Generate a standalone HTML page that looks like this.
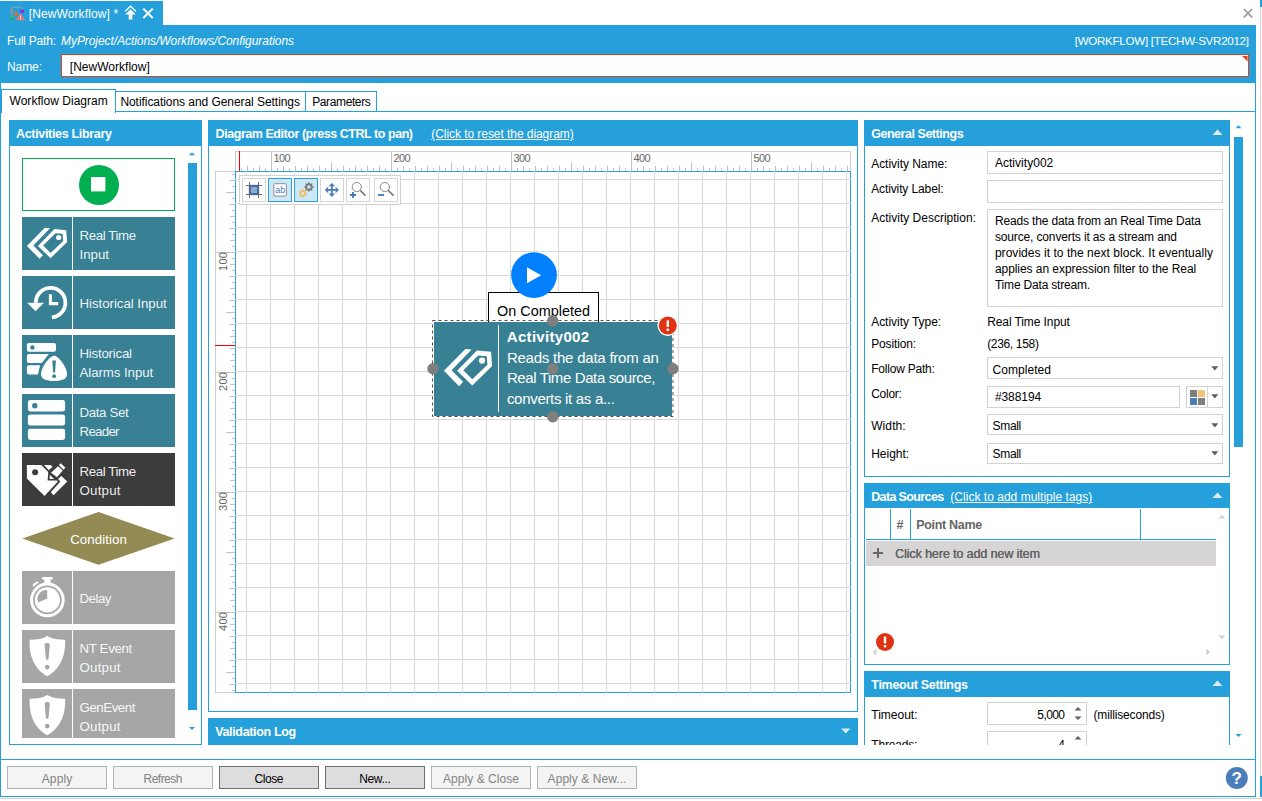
<!DOCTYPE html>
<html lang="en"><head><meta charset="utf-8"><title>[NewWorkflow] - Workflow Configuration</title>
<style>
html,body{margin:0;padding:0}
body{width:1262px;height:801px;position:relative;overflow:hidden;background:#fff;font-family:"Liberation Sans",sans-serif;font-size:12px}
.r{position:absolute;box-sizing:border-box;display:block}
.t{position:absolute;white-space:nowrap;margin:0;padding:0}
</style></head>
<body>
<!-- window chrome -->
<div class="r" style="left:0px;top:1px;width:163px;height:24px;background:#26A0DA;"></div>
<div class="r" style="left:0px;top:25px;width:1256px;height:58px;background:#26A0DA;"></div>
<div class="r" style="left:0px;top:83px;width:1px;height:714px;background:#26A0DA;"></div>
<div class="r" style="left:1255px;top:83px;width:1px;height:714px;background:#26A0DA;"></div>
<div class="r" style="left:0px;top:796px;width:1256px;height:1px;background:#26A0DA;"></div>
<div class="r" style="left:0px;top:798px;width:1262px;height:1px;background:#D6D2D2;"></div>
<div class="r" style="left:1260px;top:0px;width:2px;height:7px;background:#26A0DA;"></div>
<div class="r" style="left:1260px;top:7px;width:1px;height:769px;background:#D4D4D4;"></div>
<div class="r" style="left:1260px;top:776px;width:2px;height:21px;background:#26A0DA;"></div>
<svg class="r" style="left:10px;top:6px" width="16" height="15" viewBox="0 0 16 15">
<path d="M1.8 3.2V1.4H12.2V3.7M1.8 6.8V11.1" stroke="#a9a9a9" stroke-width="1" fill="none" stroke-dasharray="2 1.2"/>
<rect x="0.1" y="3.2" width="3.4" height="3.6" fill="#8f8f8f"/>
<rect x="10.2" y="3.7" width="3.8" height="3.1" fill="#8a2be2"/>
<rect x="4.5" y="6.5" width="3.3" height="3" fill="#ff6a00"/>
<rect x="0.1" y="11.1" width="3.4" height="3.1" fill="#22b14c"/>
<path d="M10.5 7.3 L15 14.3 H5.9 Z" fill="#e8776f"/>
<rect x="10" y="9.4" width="1" height="2.8" fill="#f7d9d6"/><rect x="10" y="12.7" width="1" height="0.9" fill="#f7d9d6"/>
</svg>
<div class="t" id="t1" style="left:28.70px;top:8.00px;font-size:12px;line-height:12px;color:#fff;letter-spacing:0.115px;">[NewWorkflow] *</div>
<svg class="r" style="left:124px;top:5px" width="13" height="16" viewBox="0 0 13 16">
<path d="M1.2 6.2 L6.5 1.2 L11.8 6.2" stroke="#fff" stroke-width="1.3" fill="none"/>
<path d="M6.5 4.2 L11.6 9.6 H8.3 V14.6 H4.7 V9.6 H1.4 Z" fill="#fff"/>
</svg>
<svg class="r" style="left:142px;top:7px" width="12" height="12" viewBox="0 0 12 12">
<path d="M1.3 1.6 L10.7 11 M10.7 1.6 L1.3 11" stroke="#fff" stroke-width="2" fill="none"/></svg>
<svg class="r" style="left:1242px;top:7px" width="12" height="12" viewBox="0 0 12 12">
<path d="M1.8 2 L10.2 10.4 M10.2 2 L1.8 10.4" stroke="#999" stroke-width="1.7" fill="none"/></svg>
<div class="t" id="t2" style="left:7.00px;top:35.00px;font-size:12px;line-height:12px;color:#fff;letter-spacing:-0.189px;">Full Path:</div>
<div class="t" id="t3" style="left:61.00px;top:35.00px;font-size:12px;line-height:12px;color:#fff;font-style:italic;letter-spacing:-0.059px;">MyProject/Actions/Workflows/Configurations</div>
<div class="t" id="t4" style="right:13.29px;top:35.00px;font-size:11.6px;line-height:11.6px;color:#fff;letter-spacing:-0.286px;">[WORKFLOW] [TECHW-SVR2012]</div>
<div class="t" id="t5" style="left:7.00px;top:61.00px;font-size:12px;line-height:12px;color:#fff;letter-spacing:-0.086px;">Name:</div>
<div class="r" style="left:61px;top:54px;width:1188px;height:23px;background:#fff;border:1px solid #E0441C;"></div>
<svg class="r" style="left:1242px;top:56px" width="6" height="6"><path d="M0 0H5.6V5.6Z" fill="#E0441C"/></svg>
<div class="t" id="t6" style="left:69.80px;top:61.00px;font-size:12px;line-height:12px;color:#000;letter-spacing:0.017px;">[NewWorkflow]</div>
<!-- tab strip -->
<div class="r" style="left:1px;top:111px;width:1255px;height:1px;background:#26A0DA;"></div>
<div class="r" style="left:1px;top:759px;width:1255px;height:1px;background:#26A0DA;"></div>
<div class="r" style="left:115px;top:91px;width:191px;height:21px;background:#fff;border:1px solid #26A0DA;"></div>
<div class="r" style="left:305px;top:91px;width:72px;height:21px;background:#fff;border:1px solid #26A0DA;"></div>
<div class="r" style="left:1px;top:89px;width:115px;height:24px;background:#fff;border:1px solid #26A0DA;border-bottom:none;"></div>
<div class="t" id="t7" style="left:9.50px;top:95.00px;font-size:12px;line-height:12px;color:#000;letter-spacing:0.032px;">Workflow Diagram</div>
<div class="t" id="t8" style="left:120.40px;top:96.00px;font-size:12px;line-height:12px;color:#000;letter-spacing:-0.056px;">Notifications and General Settings</div>
<div class="t" id="t9" style="left:312.20px;top:96.00px;font-size:12px;line-height:12px;color:#000;letter-spacing:-0.381px;">Parameters</div>
<!-- activities library -->
<div class="r" style="left:9px;top:120px;width:193px;height:625px;background:#fff;border:1px solid #26A0DA;"></div>
<div class="r" style="left:9px;top:120px;width:193px;height:26px;background:#26A0DA;"></div>
<div class="t" id="t10" style="left:16.00px;top:128.00px;font-size:12.5px;line-height:12.5px;color:#fff;font-weight:bold;letter-spacing:-0.320px;">Activities Library</div>
<svg class="r" style="left:188px;top:151px" width="9" height="6"><path d="M1 4.2 L4 1.2 L7 4.2Z" fill="#26A0DA"/></svg>
<div class="r" style="left:188px;top:163px;width:9px;height:547px;background:#26A0DA;"></div>
<svg class="r" style="left:188px;top:726px" width="9" height="6"><path d="M1 1 L4 4 L7 1Z" fill="#26A0DA"/></svg>
<div class="r" style="left:22px;top:158px;width:153px;height:53px;background:#fff;border:1px solid #00B050;"></div>
<svg class="r" style="left:78px;top:164px" width="42" height="42" viewBox="0 0 42 42"><circle cx="21" cy="21" r="20" fill="#00B050"/><rect x="13" y="13" width="14.4" height="14.4" fill="#fff"/></svg>
<div class="r" style="left:22px;top:217px;width:153px;height:53px;overflow:hidden">
<div class="r" style="left:0;top:0;width:49.7px;height:53px;background:#388194"></div>
<div class="r" style="left:51.1px;top:0;width:101.9px;height:53px;background:#388194"></div>
<svg class="r" style="left:0;top:0" width="50" height="53" viewBox="0 0 50 53"><path d="M22.8 10.8 L28 11.3 L11.3 28.6 L20.9 38.2 L17.6 41.8 L4.9 28.9 Z" fill="#fff"/>
<path fill-rule="evenodd" fill="#fff" d="M32.4 12.1 L44.2 13.2 L45.1 25 L28.6 41.2 L15.9 28.9 Z M33.5 16.3 L21.1 28.6 L28.6 36 L41.2 23.9 L40.6 16.8 Z"/>
<circle cx="36.7" cy="20.5" r="2.6" fill="#fff"/></svg>
</div>
<div class="t" id="t11" style="left:79.50px;top:229.00px;font-size:13.3px;line-height:13.3px;color:rgba(255,255,255,.93);letter-spacing:-0.407px;">Real Time</div>
<div class="t" id="t12" style="left:79.50px;top:248.00px;font-size:13.3px;line-height:13.3px;color:rgba(255,255,255,.93);letter-spacing:-0.020px;">Input</div>
<div class="r" style="left:22px;top:276px;width:153px;height:53px;overflow:hidden">
<div class="r" style="left:0;top:0;width:49.7px;height:53px;background:#388194"></div>
<div class="r" style="left:51.1px;top:0;width:101.9px;height:53px;background:#388194"></div>
<svg class="r" style="left:0;top:0" width="50" height="53" viewBox="0 0 50 53"><path d="M13.8 26.7 A14.8 14.8 0 1 1 29.9 41.4" stroke="#fff" stroke-width="3.8" fill="none"/>
<path d="M5.2 26.7 H22 L13.5 35.2 Z" fill="#fff"/>
<path d="M26.9 18.2 H29.9 V26.1 H36.2 V29.2 H26.9 Z" fill="#fff"/></svg>
</div>
<div class="t" id="t13" style="left:79.50px;top:297.00px;font-size:13.3px;line-height:13.3px;color:rgba(255,255,255,.93);letter-spacing:-0.050px;">Historical Input</div>
<div class="r" style="left:22px;top:335px;width:153px;height:53px;overflow:hidden">
<div class="r" style="left:0;top:0;width:49.7px;height:53px;background:#388194"></div>
<div class="r" style="left:51.1px;top:0;width:101.9px;height:53px;background:#388194"></div>
<svg class="r" style="left:0;top:0" width="50" height="53" viewBox="0 0 50 53"><rect x="4.9" y="8" width="29.1" height="8.8" rx="2" fill="#fff"/>
<circle cx="10.4" cy="12.5" r="2.2" fill="#388194"/>
<path d="M6.9 19 H26.9 L19.8 28.1 H6.9 A2 2 0 0 1 4.9 26.1 V21 A2 2 0 0 1 6.9 19Z" fill="#fff"/>
<path d="M6.9 30.3 H18.1 L15.9 39.6 H6.9 A2 2 0 0 1 4.9 37.6 V32.3 A2 2 0 0 1 6.9 30.3Z" fill="#fff"/>
<path d="M32.1 20.6 C38 22 45.6 34 45 40 C44.5 44.6 38 46 32 46 C26 46 19.5 44.6 19 40 C18.4 34 26.2 22 32.1 20.6 Z" fill="#fff"/>
<path d="M30.3 25.6 H33.9 L33.1 37.4 H31.1 Z" fill="#388194"/><circle cx="32.1" cy="41.2" r="1.9" fill="#388194"/></svg>
</div>
<div class="t" id="t14" style="left:79.50px;top:347.00px;font-size:13.3px;line-height:13.3px;color:rgba(255,255,255,.93);letter-spacing:-0.243px;">Historical</div>
<div class="t" id="t15" style="left:79.50px;top:366.00px;font-size:13.3px;line-height:13.3px;color:rgba(255,255,255,.93);letter-spacing:-0.086px;">Alarms Input</div>
<div class="r" style="left:22px;top:394px;width:153px;height:53px;overflow:hidden">
<div class="r" style="left:0;top:0;width:49.7px;height:53px;background:#388194"></div>
<div class="r" style="left:51.1px;top:0;width:101.9px;height:53px;background:#388194"></div>
<svg class="r" style="left:0;top:0" width="50" height="53" viewBox="0 0 50 53"><rect x="5.9" y="6.1" width="37.2" height="11.3" rx="2.4" fill="#fff"/>
<rect x="5.9" y="20.4" width="37.2" height="11.2" rx="2.4" fill="#fff"/>
<rect x="5.9" y="34.7" width="37.2" height="11.2" rx="2.4" fill="#fff"/>
<circle cx="12.8" cy="11.7" r="2.7" fill="#388194"/></svg>
</div>
<div class="t" id="t16" style="left:79.50px;top:406.00px;font-size:13.3px;line-height:13.3px;color:rgba(255,255,255,.93);letter-spacing:-0.364px;">Data Set</div>
<div class="t" id="t17" style="left:79.50px;top:425.00px;font-size:13.3px;line-height:13.3px;color:rgba(255,255,255,.93);letter-spacing:-0.725px;">Reader</div>
<div class="r" style="left:22px;top:453px;width:153px;height:53px;overflow:hidden">
<div class="r" style="left:0;top:0;width:49.7px;height:53px;background:#3C3C3C"></div>
<div class="r" style="left:51.1px;top:0;width:101.9px;height:53px;background:#3C3C3C"></div>
<svg class="r" style="left:0;top:0" width="50" height="53" viewBox="0 0 50 53"><path d="M4.9 11.9 H19.2 L35.9 28.4 L22.5 42.9 L4.9 25.6 Z" fill="#fff"/>
<circle cx="13.1" cy="19.2" r="3" fill="#3C3C3C"/>
<path d="M22 11.9 H28.6 L31.3 14.6 L27.5 17.9 Z" fill="#fff"/>
<path d="M39.3 23.1 L45.3 28.6 L31.6 42.3 L28.8 39.3 L38.4 28.6 L36 26.1 Z" fill="#fff"/>
<path d="M26.4 17.5 L36.8 8.2 L43.6 15.2 L36 23.3 L34.6 27.4 H25.6 Z" fill="#3C3C3C"/>
<path d="M29 19.7 L36 13.2 L40.7 17.5 L35 24.2 Z" fill="#fff"/>
<path d="M36.9 12 L38.7 10.2 L43.4 14.8 L41.5 16.7 Z" fill="#fff"/>
<path d="M27.7 21.8 V26 H32.2 Z" fill="#fff"/></svg>
</div>
<div class="t" id="t18" style="left:79.50px;top:465.00px;font-size:13.3px;line-height:13.3px;color:rgba(255,255,255,.93);letter-spacing:-0.407px;">Real Time</div>
<div class="t" id="t19" style="left:79.50px;top:484.00px;font-size:13.3px;line-height:13.3px;color:rgba(255,255,255,.93);letter-spacing:0.216px;">Output</div>
<svg class="r" style="left:22px;top:512px" width="153" height="53" viewBox="0 0 153 53"><path d="M0.4 26.4 L76.5 0 L152.6 26.4 L76.5 52.7 Z" fill="#948A54"/></svg>
<div class="t" id="t20" style="left:98.53px;transform:translateX(-50%);top:533.00px;font-size:13.3px;line-height:13.3px;color:#fff;letter-spacing:0.052px;">Condition</div>
<div class="r" style="left:22px;top:571px;width:153px;height:53px;overflow:hidden">
<div class="r" style="left:0;top:0;width:49.7px;height:53px;background:#A6A6A6"></div>
<div class="r" style="left:51.1px;top:0;width:101.9px;height:53px;background:#A6A6A6"></div>
<svg class="r" style="left:0;top:0" width="50" height="53" viewBox="0 0 50 53"><circle cx="25.4" cy="28.9" r="15.8" stroke="#fff" stroke-width="3" fill="none"/>
<circle cx="25.4" cy="28.9" r="12.6" fill="#fff"/>
<path d="M25.2 27.6 V19 A9.2 9.2 0 0 0 16.1 31.6 Z" fill="#A6A6A6"/>
<rect x="20" y="6" width="10.8" height="2.4" rx="0.8" fill="#fff"/><rect x="22.2" y="8" width="6.4" height="5" fill="#fff"/>
<path d="M10.9 15.9 C10 12.4 14 9.8 17.3 11 Z" fill="#fff"/></svg>
</div>
<div class="t" id="t21" style="left:79.50px;top:592.00px;font-size:13.3px;line-height:13.3px;color:rgba(255,255,255,.93);letter-spacing:-0.500px;">Delay</div>
<div class="r" style="left:22px;top:630px;width:153px;height:53px;overflow:hidden">
<div class="r" style="left:0;top:0;width:49.7px;height:53px;background:#A6A6A6"></div>
<div class="r" style="left:51.1px;top:0;width:101.9px;height:53px;background:#A6A6A6"></div>
<svg class="r" style="left:0;top:0" width="50" height="53" viewBox="0 0 50 53"><path d="M25.3 6.1 C29 8.6 36 10 43.1 9.7 C43.8 24 39.4 38.4 25.3 46.2 C11.2 38.4 6.9 24 7.7 9.7 C14.6 10 21.6 8.6 25.3 6.1 Z" fill="#fff"/>
<path d="M22.6 15 C22.6 12.4 27.8 12.4 27.8 15 L26.5 28.8 C26.4 30.3 24 30.3 23.9 28.8 Z" fill="#A6A6A6"/>
<circle cx="25.2" cy="37.1" r="2.3" fill="#A6A6A6"/></svg>
</div>
<div class="t" id="t22" style="left:79.50px;top:642.00px;font-size:13.3px;line-height:13.3px;color:rgba(255,255,255,.93);letter-spacing:-0.355px;">NT Event</div>
<div class="t" id="t23" style="left:79.50px;top:661.00px;font-size:13.3px;line-height:13.3px;color:rgba(255,255,255,.93);letter-spacing:0.216px;">Output</div>
<div class="r" style="left:0;top:0;width:203px;height:738px;overflow:hidden">
<div class="r" style="left:22px;top:689px;width:153px;height:53px;overflow:hidden">
<div class="r" style="left:0;top:0;width:49.7px;height:53px;background:#A6A6A6"></div>
<div class="r" style="left:51.1px;top:0;width:101.9px;height:53px;background:#A6A6A6"></div>
<svg class="r" style="left:0;top:0" width="50" height="53" viewBox="0 0 50 53"><path d="M25.3 6.1 C29 8.6 36 10 43.1 9.7 C43.8 24 39.4 38.4 25.3 46.2 C11.2 38.4 6.9 24 7.7 9.7 C14.6 10 21.6 8.6 25.3 6.1 Z" fill="#fff"/>
<path d="M22.6 15 C22.6 12.4 27.8 12.4 27.8 15 L26.5 28.8 C26.4 30.3 24 30.3 23.9 28.8 Z" fill="#A6A6A6"/>
<circle cx="25.2" cy="37.1" r="2.3" fill="#A6A6A6"/></svg>
</div>
<div class="t" id="t24" style="left:79.50px;top:701.00px;font-size:13.3px;line-height:13.3px;color:rgba(255,255,255,.93);letter-spacing:-0.463px;">GenEvent</div>
<div class="t" id="t25" style="left:79.50px;top:720.00px;font-size:13.3px;line-height:13.3px;color:rgba(255,255,255,.93);letter-spacing:0.216px;">Output</div>
</div>
<!-- diagram editor -->
<div class="r" style="left:208px;top:120px;width:650px;height:592px;background:#fff;border:1px solid #26A0DA;"></div>
<div class="r" style="left:208px;top:120px;width:650px;height:26px;background:#26A0DA;"></div>
<div class="t" id="t26" style="left:215.60px;top:128.00px;font-size:12.5px;line-height:12.5px;color:#fff;font-weight:bold;letter-spacing:-0.451px;">Diagram Editor (press CTRL to pan)</div>
<div class="t" id="t27" style="left:431.30px;top:128.00px;font-size:12px;line-height:12px;color:#fff;text-decoration:underline;letter-spacing:-0.061px;">(Click to reset the diagram)</div>
<div class="r" style="left:235px;top:171px;width:616px;height:522px;background:#fff;border:1px solid #26A0DA;"></div>
<svg class="r" style="left:235px;top:171px" width="616" height="522" viewBox="235 171 616 522" shape-rendering="crispEdges"><rect x="246" y="171" width="1" height="522" fill="#D9D9D9"/><rect x="270" y="171" width="1" height="522" fill="#D9D9D9"/><rect x="294" y="171" width="1" height="522" fill="#D9D9D9"/><rect x="318" y="171" width="1" height="522" fill="#D9D9D9"/><rect x="342" y="171" width="1" height="522" fill="#D9D9D9"/><rect x="366" y="171" width="1" height="522" fill="#D9D9D9"/><rect x="390" y="171" width="1" height="522" fill="#D9D9D9"/><rect x="414" y="171" width="1" height="522" fill="#D9D9D9"/><rect x="438" y="171" width="1" height="522" fill="#D9D9D9"/><rect x="462" y="171" width="1" height="522" fill="#D9D9D9"/><rect x="486" y="171" width="1" height="522" fill="#D9D9D9"/><rect x="510" y="171" width="1" height="522" fill="#D9D9D9"/><rect x="534" y="171" width="1" height="522" fill="#D9D9D9"/><rect x="558" y="171" width="1" height="522" fill="#D9D9D9"/><rect x="582" y="171" width="1" height="522" fill="#D9D9D9"/><rect x="606" y="171" width="1" height="522" fill="#D9D9D9"/><rect x="630" y="171" width="1" height="522" fill="#D9D9D9"/><rect x="654" y="171" width="1" height="522" fill="#D9D9D9"/><rect x="678" y="171" width="1" height="522" fill="#D9D9D9"/><rect x="702" y="171" width="1" height="522" fill="#D9D9D9"/><rect x="726" y="171" width="1" height="522" fill="#D9D9D9"/><rect x="750" y="171" width="1" height="522" fill="#D9D9D9"/><rect x="774" y="171" width="1" height="522" fill="#D9D9D9"/><rect x="798" y="171" width="1" height="522" fill="#D9D9D9"/><rect x="822" y="171" width="1" height="522" fill="#D9D9D9"/><rect x="846" y="171" width="1" height="522" fill="#D9D9D9"/><rect x="235" y="179" width="616" height="1" fill="#D9D9D9"/><rect x="235" y="203" width="616" height="1" fill="#D9D9D9"/><rect x="235" y="227" width="616" height="1" fill="#D9D9D9"/><rect x="235" y="251" width="616" height="1" fill="#D9D9D9"/><rect x="235" y="275" width="616" height="1" fill="#D9D9D9"/><rect x="235" y="299" width="616" height="1" fill="#D9D9D9"/><rect x="235" y="323" width="616" height="1" fill="#D9D9D9"/><rect x="235" y="347" width="616" height="1" fill="#D9D9D9"/><rect x="235" y="371" width="616" height="1" fill="#D9D9D9"/><rect x="235" y="395" width="616" height="1" fill="#D9D9D9"/><rect x="235" y="419" width="616" height="1" fill="#D9D9D9"/><rect x="235" y="443" width="616" height="1" fill="#D9D9D9"/><rect x="235" y="467" width="616" height="1" fill="#D9D9D9"/><rect x="235" y="491" width="616" height="1" fill="#D9D9D9"/><rect x="235" y="515" width="616" height="1" fill="#D9D9D9"/><rect x="235" y="539" width="616" height="1" fill="#D9D9D9"/><rect x="235" y="563" width="616" height="1" fill="#D9D9D9"/><rect x="235" y="587" width="616" height="1" fill="#D9D9D9"/><rect x="235" y="611" width="616" height="1" fill="#D9D9D9"/><rect x="235" y="635" width="616" height="1" fill="#D9D9D9"/><rect x="235" y="659" width="616" height="1" fill="#D9D9D9"/><rect x="235" y="683" width="616" height="1" fill="#D9D9D9"/></svg>
<svg class="r" style="left:235px;top:151px" width="616" height="20" viewBox="235 151 616 20" shape-rendering="crispEdges"><rect x="235" y="151" width="616" height="20" fill="#fff"/><rect x="235" y="151" width="616" height="1" fill="#CFCFCF"/><rect x="235" y="151" width="1" height="20" fill="#CFCFCF"/><rect x="850" y="151" width="1" height="20" fill="#CFCFCF"/><rect x="241" y="168" width="1" height="3" fill="#C4C4C4"/><rect x="247" y="166" width="1" height="5" fill="#C4C4C4"/><rect x="253" y="168" width="1" height="3" fill="#C4C4C4"/><rect x="259" y="166" width="1" height="5" fill="#C4C4C4"/><rect x="265" y="168" width="1" height="3" fill="#C4C4C4"/><rect x="271" y="151" width="1" height="20" fill="#C4C4C4"/><rect x="277" y="168" width="1" height="3" fill="#C4C4C4"/><rect x="283" y="166" width="1" height="5" fill="#C4C4C4"/><rect x="289" y="168" width="1" height="3" fill="#C4C4C4"/><rect x="295" y="166" width="1" height="5" fill="#C4C4C4"/><rect x="301" y="168" width="1" height="3" fill="#C4C4C4"/><rect x="307" y="166" width="1" height="5" fill="#C4C4C4"/><rect x="313" y="168" width="1" height="3" fill="#C4C4C4"/><rect x="319" y="166" width="1" height="5" fill="#C4C4C4"/><rect x="325" y="168" width="1" height="3" fill="#C4C4C4"/><rect x="331" y="162" width="1" height="9" fill="#C4C4C4"/><rect x="337" y="168" width="1" height="3" fill="#C4C4C4"/><rect x="343" y="166" width="1" height="5" fill="#C4C4C4"/><rect x="349" y="168" width="1" height="3" fill="#C4C4C4"/><rect x="355" y="166" width="1" height="5" fill="#C4C4C4"/><rect x="361" y="168" width="1" height="3" fill="#C4C4C4"/><rect x="367" y="166" width="1" height="5" fill="#C4C4C4"/><rect x="373" y="168" width="1" height="3" fill="#C4C4C4"/><rect x="379" y="166" width="1" height="5" fill="#C4C4C4"/><rect x="385" y="168" width="1" height="3" fill="#C4C4C4"/><rect x="391" y="151" width="1" height="20" fill="#C4C4C4"/><rect x="397" y="168" width="1" height="3" fill="#C4C4C4"/><rect x="403" y="166" width="1" height="5" fill="#C4C4C4"/><rect x="409" y="168" width="1" height="3" fill="#C4C4C4"/><rect x="415" y="166" width="1" height="5" fill="#C4C4C4"/><rect x="421" y="168" width="1" height="3" fill="#C4C4C4"/><rect x="427" y="166" width="1" height="5" fill="#C4C4C4"/><rect x="433" y="168" width="1" height="3" fill="#C4C4C4"/><rect x="439" y="166" width="1" height="5" fill="#C4C4C4"/><rect x="445" y="168" width="1" height="3" fill="#C4C4C4"/><rect x="451" y="162" width="1" height="9" fill="#C4C4C4"/><rect x="457" y="168" width="1" height="3" fill="#C4C4C4"/><rect x="463" y="166" width="1" height="5" fill="#C4C4C4"/><rect x="469" y="168" width="1" height="3" fill="#C4C4C4"/><rect x="475" y="166" width="1" height="5" fill="#C4C4C4"/><rect x="481" y="168" width="1" height="3" fill="#C4C4C4"/><rect x="487" y="166" width="1" height="5" fill="#C4C4C4"/><rect x="493" y="168" width="1" height="3" fill="#C4C4C4"/><rect x="499" y="166" width="1" height="5" fill="#C4C4C4"/><rect x="505" y="168" width="1" height="3" fill="#C4C4C4"/><rect x="511" y="151" width="1" height="20" fill="#C4C4C4"/><rect x="517" y="168" width="1" height="3" fill="#C4C4C4"/><rect x="523" y="166" width="1" height="5" fill="#C4C4C4"/><rect x="529" y="168" width="1" height="3" fill="#C4C4C4"/><rect x="535" y="166" width="1" height="5" fill="#C4C4C4"/><rect x="541" y="168" width="1" height="3" fill="#C4C4C4"/><rect x="547" y="166" width="1" height="5" fill="#C4C4C4"/><rect x="553" y="168" width="1" height="3" fill="#C4C4C4"/><rect x="559" y="166" width="1" height="5" fill="#C4C4C4"/><rect x="565" y="168" width="1" height="3" fill="#C4C4C4"/><rect x="571" y="162" width="1" height="9" fill="#C4C4C4"/><rect x="577" y="168" width="1" height="3" fill="#C4C4C4"/><rect x="583" y="166" width="1" height="5" fill="#C4C4C4"/><rect x="589" y="168" width="1" height="3" fill="#C4C4C4"/><rect x="595" y="166" width="1" height="5" fill="#C4C4C4"/><rect x="601" y="168" width="1" height="3" fill="#C4C4C4"/><rect x="607" y="166" width="1" height="5" fill="#C4C4C4"/><rect x="613" y="168" width="1" height="3" fill="#C4C4C4"/><rect x="619" y="166" width="1" height="5" fill="#C4C4C4"/><rect x="625" y="168" width="1" height="3" fill="#C4C4C4"/><rect x="631" y="151" width="1" height="20" fill="#C4C4C4"/><rect x="637" y="168" width="1" height="3" fill="#C4C4C4"/><rect x="643" y="166" width="1" height="5" fill="#C4C4C4"/><rect x="649" y="168" width="1" height="3" fill="#C4C4C4"/><rect x="655" y="166" width="1" height="5" fill="#C4C4C4"/><rect x="661" y="168" width="1" height="3" fill="#C4C4C4"/><rect x="667" y="166" width="1" height="5" fill="#C4C4C4"/><rect x="673" y="168" width="1" height="3" fill="#C4C4C4"/><rect x="679" y="166" width="1" height="5" fill="#C4C4C4"/><rect x="685" y="168" width="1" height="3" fill="#C4C4C4"/><rect x="691" y="162" width="1" height="9" fill="#C4C4C4"/><rect x="697" y="168" width="1" height="3" fill="#C4C4C4"/><rect x="703" y="166" width="1" height="5" fill="#C4C4C4"/><rect x="709" y="168" width="1" height="3" fill="#C4C4C4"/><rect x="715" y="166" width="1" height="5" fill="#C4C4C4"/><rect x="721" y="168" width="1" height="3" fill="#C4C4C4"/><rect x="727" y="166" width="1" height="5" fill="#C4C4C4"/><rect x="733" y="168" width="1" height="3" fill="#C4C4C4"/><rect x="739" y="166" width="1" height="5" fill="#C4C4C4"/><rect x="745" y="168" width="1" height="3" fill="#C4C4C4"/><rect x="751" y="151" width="1" height="20" fill="#C4C4C4"/><rect x="757" y="168" width="1" height="3" fill="#C4C4C4"/><rect x="763" y="166" width="1" height="5" fill="#C4C4C4"/><rect x="769" y="168" width="1" height="3" fill="#C4C4C4"/><rect x="775" y="166" width="1" height="5" fill="#C4C4C4"/><rect x="781" y="168" width="1" height="3" fill="#C4C4C4"/><rect x="787" y="166" width="1" height="5" fill="#C4C4C4"/><rect x="793" y="168" width="1" height="3" fill="#C4C4C4"/><rect x="799" y="166" width="1" height="5" fill="#C4C4C4"/><rect x="805" y="168" width="1" height="3" fill="#C4C4C4"/><rect x="811" y="162" width="1" height="9" fill="#C4C4C4"/><rect x="817" y="168" width="1" height="3" fill="#C4C4C4"/><rect x="823" y="166" width="1" height="5" fill="#C4C4C4"/><rect x="829" y="168" width="1" height="3" fill="#C4C4C4"/><rect x="835" y="166" width="1" height="5" fill="#C4C4C4"/><rect x="841" y="168" width="1" height="3" fill="#C4C4C4"/><rect x="847" y="166" width="1" height="5" fill="#C4C4C4"/><rect x="239" y="151" width="1" height="20" fill="#FF0000"/></svg>
<div class="t" id="t28" style="left:273.40px;top:153.00px;font-size:11px;line-height:11px;color:#666;letter-spacing:-0.530px;">100</div>
<div class="t" id="t29" style="left:393.40px;top:153.00px;font-size:11px;line-height:11px;color:#666;letter-spacing:-0.530px;">200</div>
<div class="t" id="t30" style="left:513.40px;top:153.00px;font-size:11px;line-height:11px;color:#666;letter-spacing:-0.530px;">300</div>
<div class="t" id="t31" style="left:633.40px;top:153.00px;font-size:11px;line-height:11px;color:#666;letter-spacing:-0.530px;">400</div>
<div class="t" id="t32" style="left:753.40px;top:153.00px;font-size:11px;line-height:11px;color:#666;letter-spacing:-0.530px;">500</div>
<svg class="r" style="left:215px;top:171px" width="20" height="522" viewBox="215 171 20 522" shape-rendering="crispEdges"><rect x="215" y="171" width="20" height="522" fill="#fff"/><rect x="215" y="171" width="20" height="1" fill="#CFCFCF"/><rect x="215" y="171" width="1" height="522" fill="#CFCFCF"/><rect x="215" y="692" width="20" height="1" fill="#CFCFCF"/><rect x="232" y="174" width="3" height="1" fill="#C4C4C4"/><rect x="230" y="180" width="5" height="1" fill="#C4C4C4"/><rect x="232" y="186" width="3" height="1" fill="#C4C4C4"/><rect x="226" y="192" width="9" height="1" fill="#C4C4C4"/><rect x="232" y="198" width="3" height="1" fill="#C4C4C4"/><rect x="230" y="204" width="5" height="1" fill="#C4C4C4"/><rect x="232" y="210" width="3" height="1" fill="#C4C4C4"/><rect x="230" y="216" width="5" height="1" fill="#C4C4C4"/><rect x="232" y="222" width="3" height="1" fill="#C4C4C4"/><rect x="230" y="228" width="5" height="1" fill="#C4C4C4"/><rect x="232" y="234" width="3" height="1" fill="#C4C4C4"/><rect x="230" y="240" width="5" height="1" fill="#C4C4C4"/><rect x="232" y="246" width="3" height="1" fill="#C4C4C4"/><rect x="215" y="252" width="20" height="1" fill="#C4C4C4"/><rect x="232" y="258" width="3" height="1" fill="#C4C4C4"/><rect x="230" y="264" width="5" height="1" fill="#C4C4C4"/><rect x="232" y="270" width="3" height="1" fill="#C4C4C4"/><rect x="230" y="276" width="5" height="1" fill="#C4C4C4"/><rect x="232" y="282" width="3" height="1" fill="#C4C4C4"/><rect x="230" y="288" width="5" height="1" fill="#C4C4C4"/><rect x="232" y="294" width="3" height="1" fill="#C4C4C4"/><rect x="230" y="300" width="5" height="1" fill="#C4C4C4"/><rect x="232" y="306" width="3" height="1" fill="#C4C4C4"/><rect x="226" y="312" width="9" height="1" fill="#C4C4C4"/><rect x="232" y="318" width="3" height="1" fill="#C4C4C4"/><rect x="230" y="324" width="5" height="1" fill="#C4C4C4"/><rect x="232" y="330" width="3" height="1" fill="#C4C4C4"/><rect x="230" y="336" width="5" height="1" fill="#C4C4C4"/><rect x="232" y="342" width="3" height="1" fill="#C4C4C4"/><rect x="230" y="348" width="5" height="1" fill="#C4C4C4"/><rect x="232" y="354" width="3" height="1" fill="#C4C4C4"/><rect x="230" y="360" width="5" height="1" fill="#C4C4C4"/><rect x="232" y="366" width="3" height="1" fill="#C4C4C4"/><rect x="215" y="372" width="20" height="1" fill="#C4C4C4"/><rect x="232" y="378" width="3" height="1" fill="#C4C4C4"/><rect x="230" y="384" width="5" height="1" fill="#C4C4C4"/><rect x="232" y="390" width="3" height="1" fill="#C4C4C4"/><rect x="230" y="396" width="5" height="1" fill="#C4C4C4"/><rect x="232" y="402" width="3" height="1" fill="#C4C4C4"/><rect x="230" y="408" width="5" height="1" fill="#C4C4C4"/><rect x="232" y="414" width="3" height="1" fill="#C4C4C4"/><rect x="230" y="420" width="5" height="1" fill="#C4C4C4"/><rect x="232" y="426" width="3" height="1" fill="#C4C4C4"/><rect x="226" y="432" width="9" height="1" fill="#C4C4C4"/><rect x="232" y="438" width="3" height="1" fill="#C4C4C4"/><rect x="230" y="444" width="5" height="1" fill="#C4C4C4"/><rect x="232" y="450" width="3" height="1" fill="#C4C4C4"/><rect x="230" y="456" width="5" height="1" fill="#C4C4C4"/><rect x="232" y="462" width="3" height="1" fill="#C4C4C4"/><rect x="230" y="468" width="5" height="1" fill="#C4C4C4"/><rect x="232" y="474" width="3" height="1" fill="#C4C4C4"/><rect x="230" y="480" width="5" height="1" fill="#C4C4C4"/><rect x="232" y="486" width="3" height="1" fill="#C4C4C4"/><rect x="215" y="492" width="20" height="1" fill="#C4C4C4"/><rect x="232" y="498" width="3" height="1" fill="#C4C4C4"/><rect x="230" y="504" width="5" height="1" fill="#C4C4C4"/><rect x="232" y="510" width="3" height="1" fill="#C4C4C4"/><rect x="230" y="516" width="5" height="1" fill="#C4C4C4"/><rect x="232" y="522" width="3" height="1" fill="#C4C4C4"/><rect x="230" y="528" width="5" height="1" fill="#C4C4C4"/><rect x="232" y="534" width="3" height="1" fill="#C4C4C4"/><rect x="230" y="540" width="5" height="1" fill="#C4C4C4"/><rect x="232" y="546" width="3" height="1" fill="#C4C4C4"/><rect x="226" y="552" width="9" height="1" fill="#C4C4C4"/><rect x="232" y="558" width="3" height="1" fill="#C4C4C4"/><rect x="230" y="564" width="5" height="1" fill="#C4C4C4"/><rect x="232" y="570" width="3" height="1" fill="#C4C4C4"/><rect x="230" y="576" width="5" height="1" fill="#C4C4C4"/><rect x="232" y="582" width="3" height="1" fill="#C4C4C4"/><rect x="230" y="588" width="5" height="1" fill="#C4C4C4"/><rect x="232" y="594" width="3" height="1" fill="#C4C4C4"/><rect x="230" y="600" width="5" height="1" fill="#C4C4C4"/><rect x="232" y="606" width="3" height="1" fill="#C4C4C4"/><rect x="215" y="612" width="20" height="1" fill="#C4C4C4"/><rect x="232" y="618" width="3" height="1" fill="#C4C4C4"/><rect x="230" y="624" width="5" height="1" fill="#C4C4C4"/><rect x="232" y="630" width="3" height="1" fill="#C4C4C4"/><rect x="230" y="636" width="5" height="1" fill="#C4C4C4"/><rect x="232" y="642" width="3" height="1" fill="#C4C4C4"/><rect x="230" y="648" width="5" height="1" fill="#C4C4C4"/><rect x="232" y="654" width="3" height="1" fill="#C4C4C4"/><rect x="230" y="660" width="5" height="1" fill="#C4C4C4"/><rect x="232" y="666" width="3" height="1" fill="#C4C4C4"/><rect x="226" y="672" width="9" height="1" fill="#C4C4C4"/><rect x="232" y="678" width="3" height="1" fill="#C4C4C4"/><rect x="230" y="684" width="5" height="1" fill="#C4C4C4"/><rect x="232" y="690" width="3" height="1" fill="#C4C4C4"/><rect x="215" y="345" width="20" height="1" fill="#FF0000"/></svg>
<div class="t" style="left:227.2px;top:270.8px;font-size:11px;line-height:11px;color:#666;transform-origin:0 0;transform:rotate(-90deg) translateY(-9.3px);letter-spacing:0.3px">100</div>
<div class="t" style="left:227.2px;top:390.8px;font-size:11px;line-height:11px;color:#666;transform-origin:0 0;transform:rotate(-90deg) translateY(-9.3px);letter-spacing:0.3px">200</div>
<div class="t" style="left:227.2px;top:510.8px;font-size:11px;line-height:11px;color:#666;transform-origin:0 0;transform:rotate(-90deg) translateY(-9.3px);letter-spacing:0.3px">300</div>
<div class="t" style="left:227.2px;top:630.8px;font-size:11px;line-height:11px;color:#666;transform-origin:0 0;transform:rotate(-90deg) translateY(-9.3px);letter-spacing:0.3px">400</div>
<div class="r" style="left:239px;top:175px;width:162px;height:30px;background:#fff;border:1px solid #D2D2D2;"></div>
<div class="r" style="left:242px;top:178px;width:24px;height:24px;background:#fff;border:1px solid #D6D6D6;"></div>
<div class="r" style="left:268px;top:178px;width:24px;height:24px;background:#CCE8F6;border:1px solid #2C9FDB;"></div>
<div class="r" style="left:294px;top:178px;width:24px;height:24px;background:#CCE8F6;border:1px solid #2C9FDB;"></div>
<div class="r" style="left:320px;top:178px;width:24px;height:24px;background:#fff;border:1px solid #D6D6D6;"></div>
<div class="r" style="left:346px;top:178px;width:24px;height:24px;background:#fff;border:1px solid #D6D6D6;"></div>
<div class="r" style="left:374px;top:178px;width:24px;height:24px;background:#fff;border:1px solid #D6D6D6;"></div>
<svg class="r" style="left:242px;top:178px" width="24" height="24" viewBox="242 178 24 24">
<rect x="249.5" y="185.5" width="9" height="9" fill="#8FAAD2" stroke="#2F5F9F" stroke-width="1.3"/>
<path d="M246 185.5H262M246 194.5H262M249.5 182V198M258.5 182V198" stroke="#707070" stroke-width="1" fill="none"/>
<rect x="250.2" y="186.2" width="7.6" height="7.6" fill="#8FAAD2" stroke="#2F5F9F" stroke-width="1.2"/>
</svg>
<svg class="r" style="left:268px;top:178px" width="24" height="24" viewBox="268 178 24 24">
<rect x="273.8" y="183.7" width="12.6" height="12.4" rx="1" fill="#fff" stroke="#8E8E8E" stroke-width="1"/>
<text x="280.2" y="192.8" font-family="Liberation Sans, sans-serif" font-size="9" fill="#4A7EBB" text-anchor="middle">ab</text>
</svg>
<svg class="r" style="left:294px;top:178px" width="24" height="24" viewBox="294 178 24 24"><path d="M313.57 186.45 L313.57 187.55 L312.36 187.98 L312.04 188.75 L312.59 189.92 L311.82 190.69 L310.65 190.14 L309.88 190.46 L309.45 191.67 L308.35 191.67 L307.92 190.46 L307.15 190.14 L305.98 190.69 L305.21 189.92 L305.76 188.75 L305.44 187.98 L304.23 187.55 L304.23 186.45 L305.44 186.02 L305.76 185.25 L305.21 184.08 L305.98 183.31 L307.15 183.86 L307.92 183.54 L308.35 182.33 L309.45 182.33 L309.88 183.54 L310.65 183.86 L311.82 183.31 L312.59 184.08 L312.04 185.25 L312.36 186.02Z" fill="#7B7B7B"/><circle cx="308.90" cy="187.00" r="1.80" fill="#CCE8F6"/><path d="M306.97 192.91 L306.97 193.89 L305.88 194.27 L305.59 194.96 L306.09 196.01 L305.41 196.69 L304.36 196.19 L303.67 196.48 L303.29 197.57 L302.31 197.57 L301.93 196.48 L301.24 196.19 L300.19 196.69 L299.51 196.01 L300.01 194.96 L299.72 194.27 L298.63 193.89 L298.63 192.91 L299.72 192.53 L300.01 191.84 L299.51 190.79 L300.19 190.11 L301.24 190.61 L301.93 190.32 L302.31 189.23 L303.29 189.23 L303.67 190.32 L304.36 190.61 L305.41 190.11 L306.09 190.79 L305.59 191.84 L305.88 192.53Z" fill="#EDBE62"/><circle cx="302.80" cy="193.40" r="1.60" fill="#CCE8F6"/></svg>
<svg class="r" style="left:320px;top:178px" width="24" height="24" viewBox="320 178 24 24">
<g fill="#4A7EBB"><path d="M331.85 182.9 L335.1 186.2 H328.6 Z"/><path d="M331.85 196.9 L335.1 193.6 H328.6 Z"/><path d="M324.8 189.9 L328.1 186.65 V193.15 Z"/><path d="M338.9 189.9 L335.6 186.65 V193.15 Z"/><rect x="330.95" y="185.6" width="1.8" height="8.6"/><rect x="327.5" y="189" width="8.7" height="1.8"/></g>
</svg>
<svg class="r" style="left:346px;top:178px" width="24" height="24" viewBox="346 178 24 24">
<circle cx="356.8" cy="187" r="4.6" fill="#fff" stroke="#7A7A7A" stroke-width="0.9"/>
<path d="M360.2 190.4 L365.6 195.6" stroke="#7A7A7A" stroke-width="1.6"/>
<path d="M350 195H356M353 192V198" stroke="#3F78BE" stroke-width="1.8"/>
</svg>
<svg class="r" style="left:374px;top:178px" width="24" height="24" viewBox="374 178 24 24">
<circle cx="384.8" cy="187" r="4.6" fill="#fff" stroke="#7A7A7A" stroke-width="0.9"/>
<path d="M388.2 190.4 L393.6 195.6" stroke="#7A7A7A" stroke-width="1.6"/>
<path d="M378 195H384" stroke="#3F78BE" stroke-width="1.8"/>
</svg>
<div class="r" style="left:488px;top:292px;width:111px;height:38px;background:#fff;border:1px solid #000;"></div>
<div class="t" id="t33" style="left:497.00px;top:304.00px;font-size:14.4px;line-height:14.4px;color:#000;letter-spacing:0.018px;">On Completed</div>
<svg class="r" style="left:510px;top:251px" width="48" height="48" viewBox="510 251 48 48"><circle cx="534" cy="275.1" r="22.9" fill="#0080FF"/><path d="M527 267.2 L541.2 275.2 L527 283.2 Z" fill="#fff"/></svg>
<div class="r" style="left:434px;top:322px;width:238px;height:94px;background:#388194;"></div>
<div class="r" style="left:498px;top:325px;width:1px;height:87px;background:#fff;"></div>
<svg class="r" style="left:438.3px;top:336.2px" width="60" height="63.6" viewBox="0 0 50 53"><path d="M22.8 10.8 L28 11.3 L11.3 28.6 L20.9 38.2 L17.6 41.8 L4.9 28.9 Z" fill="#fff"/>
<path fill-rule="evenodd" fill="#fff" d="M32.4 12.1 L44.2 13.2 L45.1 25 L28.6 41.2 L15.9 28.9 Z M33.5 16.3 L21.1 28.6 L28.6 36 L41.2 23.9 L40.6 16.8 Z"/>
<circle cx="36.7" cy="20.5" r="2.6" fill="#fff"/></svg>
<div class="t" id="t34" style="left:506.80px;top:329.00px;font-size:15px;line-height:15px;color:#fff;font-weight:bold;letter-spacing:0.308px;">Activity002</div>
<div class="t" id="t35" style="left:506.90px;top:350.00px;font-size:15px;line-height:15px;color:#fff;letter-spacing:-0.227px;">Reads the data from an</div>
<div class="t" id="t36" style="left:506.90px;top:370.00px;font-size:15px;line-height:15px;color:#fff;letter-spacing:-0.387px;">Real Time Data source,</div>
<div class="t" id="t37" style="left:506.90px;top:391.00px;font-size:15px;line-height:15px;color:#fff;letter-spacing:-0.299px;">converts it as a...</div>
<svg class="r" style="left:425px;top:312px" width="256" height="112" viewBox="425 312 256 112"><rect x="432.5" y="320.5" width="240.5" height="96" fill="none" stroke="#505050" stroke-width="1" stroke-dasharray="3 3"/><g fill="#7F7F7F"><circle cx="433" cy="368.7" r="5.7"/><circle cx="552.8" cy="368.7" r="5.7"/><circle cx="673" cy="368.7" r="5.7"/><circle cx="552.8" cy="320.8" r="5.7"/><circle cx="552.8" cy="416.7" r="5.7"/></g><circle cx="667.8" cy="325.6" r="10.4" fill="#fff"/><circle cx="667.8" cy="325.6" r="9" fill="#DF3312"/><rect x="666.6" y="320.4" width="2.4" height="6.6" fill="#fff"/><rect x="666.6" y="328.6" width="2.4" height="2.4" fill="#fff"/></svg>
<!-- validation log -->
<div class="r" style="left:208px;top:718px;width:650px;height:27px;background:#26A0DA;"></div>
<div class="t" id="t38" style="left:215.20px;top:726.00px;font-size:12.5px;line-height:12.5px;color:#fff;font-weight:bold;letter-spacing:-0.340px;">Validation Log</div>
<svg class="r" style="left:840.8px;top:728.3px" width="12" height="7"><path d="M0.3 0.4 H9.3 L4.8 5.4 Z" fill="#D9EEF9"/></svg>
<!-- general settings -->
<div class="r" style="left:864px;top:120px;width:366px;height:357px;background:#fff;border:1px solid #26A0DA;"></div>
<div class="r" style="left:864px;top:120px;width:366px;height:26px;background:#26A0DA;"></div>
<div class="t" id="t39" style="left:871.20px;top:128.00px;font-size:12.5px;line-height:12.5px;color:#fff;font-weight:bold;letter-spacing:-0.463px;">General Settings</div>
<svg class="r" style="left:1212px;top:129.3px" width="12" height="7"><path d="M0.5 6 L5.5 0.5 L10.5 6 Z" fill="#D9EEF9"/></svg>
<div class="t" id="t40" style="left:871.20px;top:158.00px;font-size:12px;line-height:12px;color:#000;letter-spacing:-0.037px;">Activity Name:</div>
<div class="r" style="left:987px;top:151px;width:236px;height:23px;background:#fff;border:1px solid #D2D2D2;"></div>
<div class="t" id="t41" style="left:994.90px;top:157.00px;font-size:12px;line-height:12px;color:#000;letter-spacing:0.037px;">Activity002</div>
<div class="t" id="t42" style="left:871.20px;top:183.00px;font-size:12px;line-height:12px;color:#000;letter-spacing:-0.118px;">Activity Label:</div>
<div class="r" style="left:987px;top:180px;width:236px;height:23px;background:#fff;border:1px solid #D2D2D2;"></div>
<div class="t" id="t43" style="left:871.20px;top:212.00px;font-size:12px;line-height:12px;color:#000;letter-spacing:0.005px;">Activity Description:</div>
<div class="r" style="left:987px;top:209px;width:236px;height:98px;background:#fff;border:1px solid #D2D2D2;"></div>
<div class="t" id="t44" style="left:994.90px;top:215.00px;font-size:12px;line-height:12px;color:#000;letter-spacing:-0.151px;">Reads the data from an Real Time Data</div>
<div class="t" id="t45" style="left:994.90px;top:231.00px;font-size:12px;line-height:12px;color:#000;letter-spacing:-0.140px;">source, converts it as a stream and</div>
<div class="t" id="t46" style="left:994.90px;top:247.00px;font-size:12px;line-height:12px;color:#000;letter-spacing:0.044px;">provides it to the next block. It eventually</div>
<div class="t" id="t47" style="left:994.90px;top:263.00px;font-size:12px;line-height:12px;color:#000;letter-spacing:-0.053px;">applies an expression filter to the Real</div>
<div class="t" id="t48" style="left:994.90px;top:279.00px;font-size:12px;line-height:12px;color:#000;letter-spacing:-0.184px;">Time Data stream.</div>
<div class="t" id="t49" style="left:871.20px;top:316.00px;font-size:12px;line-height:12px;color:#000;letter-spacing:-0.037px;">Activity Type:</div>
<div class="t" id="t50" style="left:987.20px;top:316.00px;font-size:12px;line-height:12px;color:#000;letter-spacing:-0.096px;">Real Time Input</div>
<div class="t" id="t51" style="left:871.20px;top:338.00px;font-size:12px;line-height:12px;color:#000;letter-spacing:-0.129px;">Position:</div>
<div class="t" id="t52" style="left:987.20px;top:338.00px;font-size:12px;line-height:12px;color:#000;letter-spacing:-0.334px;">(236, 158)</div>
<div class="t" id="t53" style="left:871.20px;top:363.00px;font-size:12px;line-height:12px;color:#000;letter-spacing:-0.212px;">Follow Path:</div>
<div class="r" style="left:987px;top:357px;width:236px;height:22px;background:#fff;border:1px solid #D2D2D2;"></div>
<div class="t" id="t54" style="left:992.50px;top:364.00px;font-size:12px;line-height:12px;color:#000;letter-spacing:0.059px;">Completed</div>
<svg class="r" style="left:1211.2px;top:366px" width="8" height="5"><path d="M0.3 0.3 H7.3 L3.8 4.4 Z" fill="#5F5F5F"/></svg>
<div class="t" id="t55" style="left:871.20px;top:388.00px;font-size:12px;line-height:12px;color:#000;letter-spacing:-0.263px;">Color:</div>
<div class="r" style="left:987px;top:386px;width:193px;height:22px;background:#fff;border:1px solid #D2D2D2;"></div>
<div class="t" id="t56" style="left:994.90px;top:391.00px;font-size:12px;line-height:12px;color:#000;letter-spacing:-0.070px;">#388194</div>
<div class="r" style="left:1186px;top:386px;width:37px;height:22px;background:#fff;border:1px solid #D2D2D2;"></div>
<div class="r" style="left:1207px;top:387px;width:1px;height:20px;background:#D2D2D2;"></div>
<div class="r" style="left:1190px;top:390px;width:7px;height:7px;background:#7F7F7F;"></div>
<div class="r" style="left:1198px;top:390px;width:7px;height:7px;background:#EBC474;"></div>
<div class="r" style="left:1190px;top:398px;width:7px;height:7px;background:#4A7EBB;"></div>
<div class="r" style="left:1198px;top:398px;width:7px;height:7px;background:#7F7F7F;"></div>
<svg class="r" style="left:1211.2px;top:394px" width="8" height="5"><path d="M0.3 0.3 H7.3 L3.8 4.4 Z" fill="#5F5F5F"/></svg>
<div class="t" id="t57" style="left:871.20px;top:420.00px;font-size:12px;line-height:12px;color:#000;letter-spacing:0.097px;">Width:</div>
<div class="r" style="left:987px;top:414px;width:236px;height:21px;background:#fff;border:1px solid #D2D2D2;"></div>
<div class="t" id="t58" style="left:992.50px;top:420.00px;font-size:12px;line-height:12px;color:#000;letter-spacing:-0.304px;">Small</div>
<svg class="r" style="left:1211.2px;top:423px" width="8" height="5"><path d="M0.3 0.3 H7.3 L3.8 4.4 Z" fill="#5F5F5F"/></svg>
<div class="t" id="t59" style="left:871.20px;top:448.00px;font-size:12px;line-height:12px;color:#000;letter-spacing:-0.005px;">Height:</div>
<div class="r" style="left:987px;top:443px;width:236px;height:21px;background:#fff;border:1px solid #D2D2D2;"></div>
<div class="t" id="t60" style="left:992.50px;top:448.00px;font-size:12px;line-height:12px;color:#000;letter-spacing:-0.304px;">Small</div>
<svg class="r" style="left:1211.2px;top:451px" width="8" height="5"><path d="M0.3 0.3 H7.3 L3.8 4.4 Z" fill="#5F5F5F"/></svg>
<svg class="r" style="left:1234px;top:124px" width="9" height="6"><path d="M1.5 4.2 L4.5 1.2 L7.5 4.2Z" fill="#26A0DA"/></svg>
<div class="r" style="left:1234px;top:137px;width:9px;height:310px;background:#26A0DA;"></div>
<svg class="r" style="left:1234px;top:733px" width="9" height="6"><path d="M1.5 1 L4.5 4 L7.5 1Z" fill="#26A0DA"/></svg>
<!-- data sources -->
<div class="r" style="left:864px;top:483px;width:366px;height:182px;background:#fff;border:1px solid #26A0DA;"></div>
<div class="r" style="left:864px;top:483px;width:366px;height:25px;background:#26A0DA;"></div>
<div class="t" id="t61" style="left:871.20px;top:491.00px;font-size:12.5px;line-height:12.5px;color:#fff;font-weight:bold;letter-spacing:-0.628px;">Data Sources</div>
<div class="t" id="t62" style="left:950.30px;top:491.00px;font-size:12px;line-height:12px;color:#fff;text-decoration:underline;letter-spacing:0.023px;">(Click to add multiple tags)</div>
<svg class="r" style="left:1212px;top:492.3px" width="12" height="7"><path d="M0.5 6 L5.5 0.5 L10.5 6 Z" fill="#D9EEF9"/></svg>
<div class="r" style="left:890px;top:509px;width:1px;height:30px;background:#26A0DA;"></div>
<div class="r" style="left:910px;top:509px;width:1px;height:30px;background:#26A0DA;"></div>
<div class="r" style="left:1140px;top:509px;width:1px;height:30px;background:#26A0DA;"></div>
<div class="r" style="left:866px;top:539px;width:350px;height:1px;background:#26A0DA;"></div>
<div class="t" id="t63" style="left:896.40px;top:519.00px;font-size:12.5px;line-height:12.5px;color:#666;font-weight:bold;letter-spacing:0.047px;">#</div>
<div class="t" id="t64" style="left:916.20px;top:519.00px;font-size:12.5px;line-height:12.5px;color:#666;font-weight:bold;letter-spacing:-0.307px;">Point Name</div>
<div class="r" style="left:866px;top:541px;width:350px;height:25px;background:#D6D4D4;"></div>
<div class="r" style="left:873px;top:552.3px;width:10px;height:1.8px;background:#666;"></div>
<div class="r" style="left:877.1px;top:548.2px;width:1.8px;height:10px;background:#666;"></div>
<div class="t" id="t65" style="left:895.00px;top:548.00px;font-size:12.5px;line-height:12.5px;color:#616161;letter-spacing:-0.100px;text-shadow:0.3px 0 0 #616161;">Click here to add new item</div>
<svg class="r" style="left:875px;top:632px" width="20" height="20" viewBox="875 632 20 20"><circle cx="885" cy="642" r="9" fill="#DF3312"/><rect x="883.8" y="636.6" width="2.4" height="6.8" fill="#fff"/><rect x="883.8" y="645" width="2.4" height="2.4" fill="#fff"/></svg>
<svg class="r" style="left:1218px;top:514px" width="8" height="5"><path d="M0.5 4.5 L4 1 L7.5 4.5Z" fill="#CDCDCD"/></svg>
<svg class="r" style="left:1218px;top:635px" width="8" height="5"><path d="M0.5 0.5 L4 4 L7.5 0.5Z" fill="#CDCDCD"/></svg>
<svg class="r" style="left:872px;top:648px" width="5" height="8"><path d="M4.5 0.5 L1 4 L4.5 7.5Z" fill="#CDCDCD"/></svg>
<svg class="r" style="left:1206px;top:648px" width="5" height="8"><path d="M0.5 0.5 L4 4 L0.5 7.5Z" fill="#CDCDCD"/></svg>
<!-- timeout settings (clipped at 745) -->
<div class="r" style="left:0;top:0;width:1262px;height:745px;overflow:hidden">
<div class="r" style="left:864px;top:671px;width:366px;height:129px;background:#fff;border:1px solid #26A0DA;"></div>
<div class="r" style="left:864px;top:671px;width:366px;height:26px;background:#26A0DA;"></div>
<div class="t" id="t66" style="left:871.30px;top:679.00px;font-size:12.5px;line-height:12.5px;color:#fff;font-weight:bold;letter-spacing:-0.298px;">Timeout Settings</div>
<svg class="r" style="left:1212px;top:680.3px" width="12" height="7"><path d="M0.5 6 L5.5 0.5 L10.5 6 Z" fill="#D9EEF9"/></svg>
<div class="t" id="t67" style="left:871.30px;top:709.00px;font-size:12px;line-height:12px;color:#000;letter-spacing:-0.007px;">Timeout:</div>
<div class="r" style="left:987px;top:702px;width:100px;height:23px;background:#fff;border:1px solid #D2D2D2;"></div>
<div class="t" id="t68" style="right:197.58px;top:709.00px;font-size:12px;line-height:12px;color:#000;letter-spacing:-0.583px;">5,000</div>
<svg class="r" style="left:1074px;top:705.5px" width="8" height="16"><path d="M0.5 4.6 L4 1 L7.5 4.6Z M0.5 10.4 L4 14 L7.5 10.4Z" fill="#5F5F5F"/></svg>
<div class="t" id="t69" style="left:1093.50px;top:709.00px;font-size:12px;line-height:12px;color:#000;letter-spacing:-0.158px;">(milliseconds)</div>
<div class="t" id="t70" style="left:871.30px;top:739.00px;font-size:12px;line-height:12px;color:#000;letter-spacing:-0.194px;">Threads:</div>
<div class="r" style="left:987px;top:731px;width:100px;height:23px;background:#fff;border:1px solid #D2D2D2;"></div>
<div class="t" id="t71" style="right:197.00px;top:739.00px;font-size:12px;line-height:12px;color:#000;">4</div>
<svg class="r" style="left:1074px;top:734.5px" width="8" height="16"><path d="M0.5 4.6 L4 1 L7.5 4.6Z M0.5 10.4 L4 14 L7.5 10.4Z" fill="#5F5F5F"/></svg>
</div>
<!-- bottom bar -->
<div class="r" style="left:7px;top:766px;width:100px;height:23px;background:#F4F4F4;border:1px solid #ADB2B5;"></div>
<div class="t" id="t72" style="left:57.06px;transform:translateX(-50%);top:773.00px;font-size:12px;line-height:12px;color:#838383;letter-spacing:0.117px;">Apply</div>
<div class="r" style="left:113px;top:766px;width:100px;height:23px;background:#F4F4F4;border:1px solid #ADB2B5;"></div>
<div class="t" id="t73" style="left:162.73px;transform:translateX(-50%);top:773.00px;font-size:12px;line-height:12px;color:#838383;letter-spacing:-0.539px;">Refresh</div>
<div class="r" style="left:219px;top:766px;width:100px;height:23px;background:#DDDDDD;border:1px solid #707070;"></div>
<div class="t" id="t74" style="left:268.78px;transform:translateX(-50%);top:773.00px;font-size:12px;line-height:12px;color:#000;letter-spacing:-0.447px;">Close</div>
<div class="r" style="left:325px;top:766px;width:100px;height:23px;background:#DDDDDD;border:1px solid #707070;"></div>
<div class="t" id="t75" style="left:374.82px;transform:translateX(-50%);top:773.00px;font-size:12px;line-height:12px;color:#000;letter-spacing:-0.352px;">New...</div>
<div class="r" style="left:431px;top:766px;width:100px;height:23px;background:#F4F4F4;border:1px solid #ADB2B5;"></div>
<div class="t" id="t76" style="left:481.03px;transform:translateX(-50%);top:773.00px;font-size:12px;line-height:12px;color:#838383;letter-spacing:0.052px;">Apply &amp; Close</div>
<div class="r" style="left:537px;top:766px;width:100px;height:23px;background:#F4F4F4;border:1px solid #ADB2B5;"></div>
<div class="t" id="t77" style="left:587.03px;transform:translateX(-50%);top:773.00px;font-size:12px;line-height:12px;color:#838383;letter-spacing:0.058px;">Apply &amp; New...</div>
<svg class="r" style="left:1225px;top:766px" width="24" height="24" viewBox="1225 766 24 24"><circle cx="1236.8" cy="778" r="11" fill="#4A7EBB"/><text x="1236.8" y="784.2" font-family="Liberation Sans, sans-serif" font-size="17" font-weight="bold" fill="#fff" text-anchor="middle">?</text></svg>
</body></html>
